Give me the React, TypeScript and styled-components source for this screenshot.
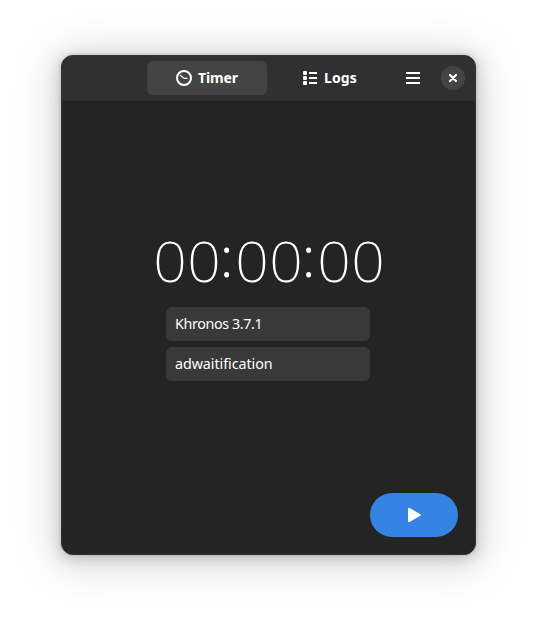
import React from "react";
import styled, { createGlobalStyle } from "styled-components";

const GlobalStyle = createGlobalStyle`
  * { box-sizing: border-box; }
  html, body { margin: 0; background: #fff; }
  button, input { font: inherit; color: inherit; border: 0; margin: 0; padding: 0; }
`;

const Desktop = styled.div`
  width: 537px;
  height: 622px;
  padding: 55px 61px 67px;
  overflow: hidden;
  background: #fff;
  color: #fff;
  font: 14.3px/20px "Noto Sans", "Open Sans", sans-serif;
`;

const Window = styled.main`
  display: flex;
  flex-direction: column;
  height: 500px;
  overflow: hidden;
  border-radius: 12px;
  background: #242424;
  border: 1px solid #343535;
  box-shadow: 0 0 3px rgba(0, 0, 0, 0.2), 0 3px 14px 3px rgba(0, 0, 0, 0.15),
    0 4px 42px 10px rgba(0, 0, 0, 0.12);
`;

const HeaderBar = styled.header`
  display: flex;
  align-items: center;
  flex: 0 0 46px;
  padding: 0 10px 1px 85px;
  background: #303030;
  border-bottom: 1px solid #1f1f1f;
`;

const TabButton = styled.button<{ $active?: boolean }>`
  display: flex;
  align-items: center;
  justify-content: center;
  gap: 6px;
  flex: 0 0 120px;
  height: 34px;
  margin-right: 3px;
  border-radius: 6px;
  background: ${(p) => (p.$active ? "#444444" : "transparent")};
`;

const TabLabel = styled.span<{ $width: number; $tracking: number }>`
  width: ${(p) => p.$width}px;
  font-weight: 700;
  font-size: 14px;
  letter-spacing: ${(p) => p.$tracking}px;
  text-align: left;
  white-space: nowrap;
`;

const MenuButton = styled.button`
  display: grid;
  place-items: center;
  flex: 0 0 34px;
  height: 34px;
  margin-left: auto;
  background: transparent;
`;

const CloseButton = styled.button`
  display: grid;
  place-items: center;
  flex: 0 0 24px;
  height: 24px;
  margin-left: 11px;
  border-radius: 50%;
  background: #444444;
`;

const Content = styled.section`
  display: flex;
  flex-direction: column;
  align-items: center;
  flex: 1;
  padding: 126px 17px 17px;
`;

const Clock = styled.div`
  display: flex;
  height: 64px;
  font-size: 56px;
  line-height: 64px;
  font-weight: 200;
`;

const Digit = styled.span`
  display: flex;
  justify-content: center;
  width: 34px;
  transform: scaleX(1.05);
`;

const Colon = styled.span`
  display: flex;
  justify-content: center;
  width: 14px;
  margin: -5px 1px 0 -1px;
  font-weight: 300;
`;

const Fields = styled.div`
  display: grid;
  gap: 6px;
  margin: 15px 1px 0 0;
  width: 204px;
`;

const Entry = styled.input<{ $tracking: number }>`
  width: 100%;
  height: 34px;
  padding: 0 9px 2px;
  border-radius: 6px;
  background: #393939;
  letter-spacing: ${(p) => p.$tracking}px;
  outline: none;
`;

const StartButton = styled.button`
  display: grid;
  place-items: center;
  width: 88px;
  height: 44px;
  margin-top: auto;
  align-self: flex-end;
  border-radius: 22px;
  background: #3584e4;
`;

const ClockIcon = () => (
  <svg width="16" height="16" viewBox="0 0 16 16" fill="none" stroke="#fff">
    <circle cx="8" cy="8" r="7" strokeWidth="2" />
    <path d="M4.5 5.5 8 8.4h3" strokeWidth="1.2" strokeLinecap="round" strokeLinejoin="round" />
  </svg>
);

const ListIcon = () => (
  <svg width="16" height="16" viewBox="0 0 16 16" fill="#fff">
    <rect x="1" y="1" width="4" height="4" rx="1" />
    <rect x="1" y="6" width="4" height="4" rx="1" />
    <rect x="1" y="11" width="4" height="4" rx="1" />
    <path d="M7 2h8v2H7zM7 7h8v2H7zM7 12h8v2H7z" />
  </svg>
);

const MenuIcon = () => (
  <svg width="16" height="16" viewBox="0 0 16 16" fill="#fff">
    <path d="M1 2h14v2H1zM1 7h14v2H1zM1 12h14v2H1z" />
  </svg>
);

const CloseIcon = () => (
  <svg width="16" height="16" viewBox="0 0 16 16" fill="none">
    <path d="m5 5 6 6M11 5l-6 6" stroke="#fff" strokeWidth="2.2" strokeLinecap="round" />
  </svg>
);

const PlayIcon = () => (
  <svg width="16" height="16" viewBox="0 0 16 16" fill="#fff">
    <path d="M2 1v14h1c.35 0 .7-.1 1-.26l10.3-5.9a1 1 0 0 0 0-1.7L4 1.26A2 2 0 0 0 3 1z" />
  </svg>
);

export default function App() {
  return (
    <Desktop>
      <GlobalStyle />
      <Window>
        <HeaderBar>
          <TabButton $active>
            <ClockIcon />
            <TabLabel $width={40} $tracking={-0.1}>Timer</TabLabel>
          </TabButton>
          <TabButton>
            <ListIcon />
            <TabLabel $width={34} $tracking={0.1}>Logs</TabLabel>
          </TabButton>
          <MenuButton aria-label="Main menu">
            <MenuIcon />
          </MenuButton>
          <CloseButton aria-label="Close">
            <CloseIcon />
          </CloseButton>
        </HeaderBar>
        <Content>
          <Clock>
            {"00:00:00".split("").map((glyph, i) =>
              glyph === ":" ? <Colon key={i}>:</Colon> : <Digit key={i}>{glyph}</Digit>
            )}
          </Clock>
          <Fields>
            <Entry defaultValue="Khronos 3.7.1" $tracking={-0.38} />
            <Entry defaultValue="adwaitification" $tracking={-0.06} />
          </Fields>
          <StartButton aria-label="Start">
            <PlayIcon />
          </StartButton>
        </Content>
      </Window>
    </Desktop>
  );
}
